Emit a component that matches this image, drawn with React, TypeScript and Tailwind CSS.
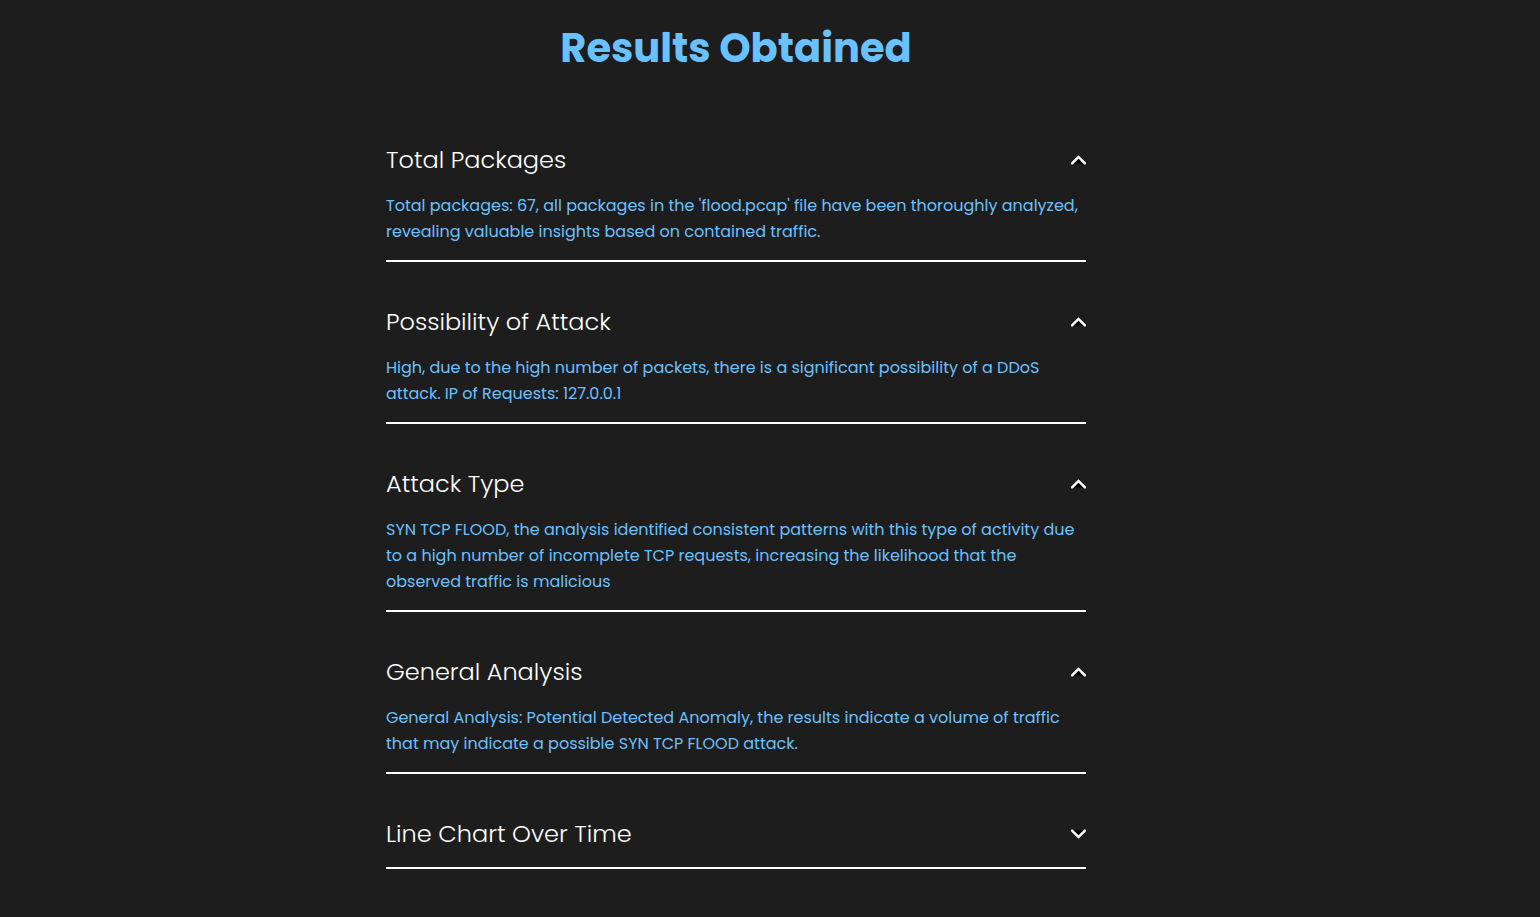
import { useState } from "react";

type Section = { id: string; title: string; body: string; open: boolean };

const sections: Section[] = [
  {
    id: "packages",
    title: "Total Packages",
    body: "Total packages: 67, all packages in the 'flood.pcap' file have been thoroughly analyzed, revealing valuable insights based on contained traffic.",
    open: true,
  },
  {
    id: "possibility",
    title: "Possibility of Attack",
    body: "High, due to the high number of packets, there is a significant possibility of a DDoS attack. IP of Requests: 127.0.0.1",
    open: true,
  },
  {
    id: "type",
    title: "Attack Type",
    body: "SYN TCP FLOOD, the analysis identified consistent patterns with this type of activity due to a high number of incomplete TCP requests, increasing the likelihood that the observed traffic is malicious",
    open: true,
  },
  {
    id: "analysis",
    title: "General Analysis",
    body: "General Analysis: Potential Detected Anomaly, the results indicate a volume of traffic that may indicate a possible SYN TCP FLOOD attack.",
    open: true,
  },
  { id: "chart", title: "Line Chart Over Time", body: "", open: false },
];

function Chevron({ open }: { open: boolean }) {
  return (
    <svg
      viewBox="0 0 42 25"
      aria-hidden="true"
      className={
        open
          ? "h-[10px] w-[15px] shrink-0 rotate-180"
          : "h-[10px] w-[15px] shrink-0"
      }
    >
      <path
        d="M3 3L21 21L39 3"
        stroke="white"
        strokeWidth="7"
        strokeLinecap="round"
      />
    </svg>
  );
}

function AccordionItem({ section }: { section: Section }) {
  const [open, setOpen] = useState(section.open);
  return (
    <section className="border-b-2 border-white pt-[42px] pb-[15px]">
      <h2>
        <button
          type="button"
          aria-expanded={open}
          aria-controls={section.id}
          onClick={() => setOpen(!open)}
          className="flex w-full cursor-pointer items-center justify-between text-left text-2xl leading-9 font-light text-white"
        >
          {section.title}
          <Chevron open={open} />
        </button>
      </h2>
      <div id={section.id}>
        {open && (
          <p className="pt-[15px] text-base leading-[26px] text-[#6ac1ff]">
            {section.body}
          </p>
        )}
      </div>
    </section>
  );
}

export default function App() {
  return (
    <div className="min-h-screen bg-[#1d1d1d] pr-[68px] font-['Poppins','Inter',sans-serif]">
      <main className="mx-auto max-w-[700px] pt-[18px] pb-12">
        <h1 className="mb-[22px] text-center text-[40px] leading-[60px] font-bold text-[#6ac1ff]">
          Results Obtained
        </h1>
        {sections.map((section) => (
          <AccordionItem key={section.id} section={section} />
        ))}
      </main>
    </div>
  );
}
